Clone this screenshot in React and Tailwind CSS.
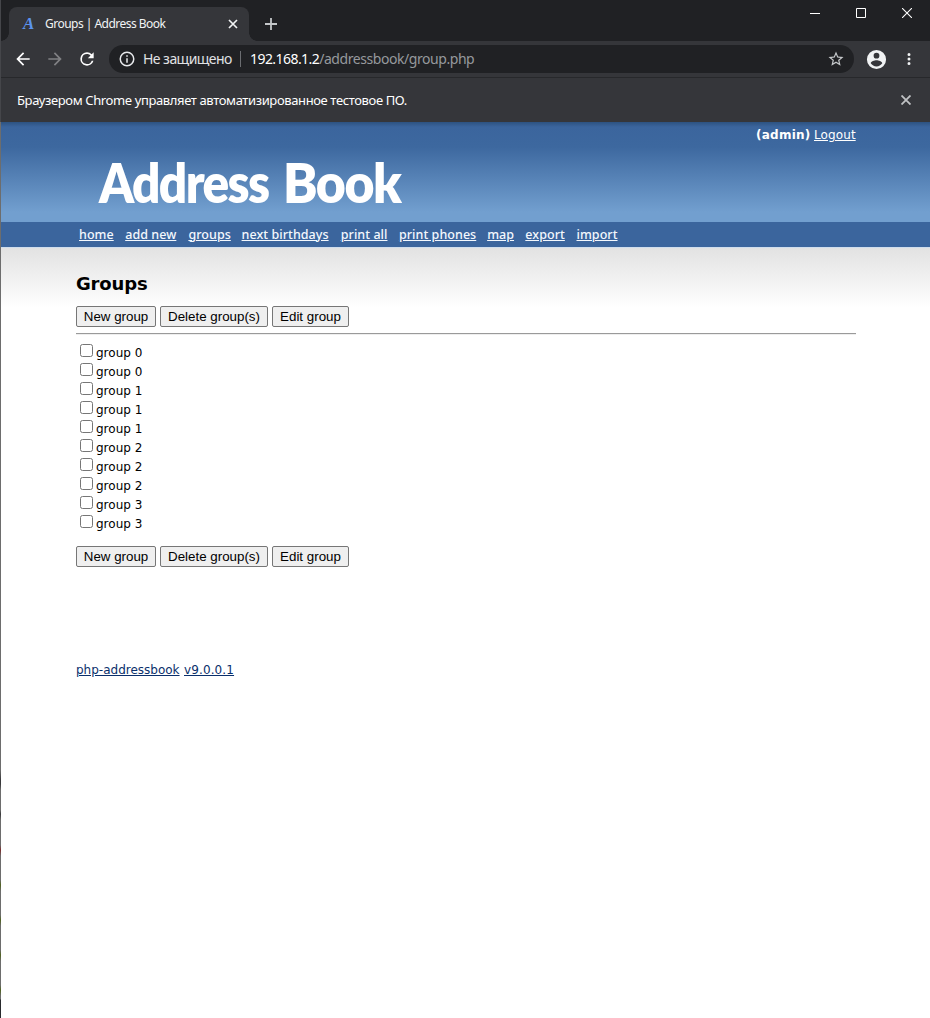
import React from "react";

const nav = [
  ["home", "w-[34px]"],
  ["add new", "w-[51px]"],
  ["groups", "w-[41px]"],
  ["next birthdays", "w-[87px]"],
  ["print all", "w-[46px]"],
  ["print phones", "w-[76px]"],
  ["map", "w-[26px]"],
  ["export", "w-[39px]"],
  ["import", "w-[40px]"],
];

const groups = ["group 0", "group 0", "group 1", "group 1", "group 1", "group 2", "group 2", "group 2", "group 3", "group 3"];

function Icon({ d, className }) {
  return (
    <svg viewBox="0 0 24 24" className={className} fill="currentColor">
      <path d={d} />
    </svg>
  );
}

function TitleBar() {
  return (
    <div className="flex h-[41px] bg-[#202124] pl-2">
      <div className="relative mt-[7px] flex h-[34px] w-[240px] items-center rounded-t-[8px] bg-[#35363a] pl-[14px] pr-[11px]">
        <span className="absolute -left-2 bottom-0 size-2 bg-[radial-gradient(circle_at_0_0,#202124_7.5px,#35363a_8px)]" />
        <span className="absolute -right-2 bottom-0 size-2 bg-[radial-gradient(circle_at_100%_0,#202124_7.5px,#35363a_8px)]" />
        <span className="w-[22px] shrink-0 font-['Liberation_Serif',serif] text-[17px] font-bold italic leading-4 text-[#5b93ee]">A</span>
        <span className="grow whitespace-nowrap text-[12px] leading-4 tracking-[-0.52px] text-[#f1f3f4]">Groups | Address Book</span>
        <svg viewBox="0 0 10 10" className="size-[10px] shrink-0 text-[#f1f3f4]" fill="none" stroke="currentColor" strokeWidth="1.7">
          <path d="M1 1l8 8M9 1L1 9" />
        </svg>
      </div>
      <svg viewBox="0 0 12 12" className="ml-4 mt-[18px] size-3" fill="none" stroke="#c4c7c9" strokeWidth="1.8">
        <path d="M6 0v12M0 6h12" />
      </svg>
      <div className="ml-auto flex gap-9 pr-[18px] pt-2">
        <svg viewBox="0 0 10 10" className="size-[10px]" stroke="#fff"><path d="M0 5.5h10" /></svg>
        <svg viewBox="0 0 10 10" className="size-[10px]" stroke="#fff" fill="none"><path d="M.5.5h9v9h-9z" /></svg>
        <svg viewBox="0 0 10 10" className="size-[10px]" stroke="#fff" strokeWidth="1.1"><path d="M0 0l10 10M10 0L0 10" /></svg>
      </div>
    </div>
  );
}

function Toolbar() {
  return (
    <div className="flex h-9 items-center bg-[#35363a] pl-3 pr-[12.5px]">
      <Icon className="size-5 text-white" d="M20 11H7.83l5.59-5.59L12 4l-8 8 8 8 1.41-1.41L7.83 13H20v-2z" />
      <Icon className="ml-3 size-5 text-[#808184]" d="M12 4l-1.41 1.41L16.17 11H4v2h12.17l-5.58 5.59L12 20l8-8z" />
      <Icon className="ml-3 size-5 text-white" d="M17.65 6.35A7.96 7.96 0 0 0 12 4a8 8 0 1 0 7.73 10h-2.08A6 6 0 1 1 12 6c1.66 0 3.14.69 4.22 1.78L13 11h7V4l-2.35 2.35z" />
      <div className="ml-3 flex h-7 w-[745px] items-center rounded-full bg-[#202124] pl-[9px] pr-[9px]">
        <Icon className="size-[18px] text-[#e8eaed]" d="M11 17h2v-6h-2v6zm1-15a10 10 0 1 0 0 20 10 10 0 0 0 0-20zm0 18a8 8 0 1 1 0-16 8 8 0 0 1 0 16zM11 9h2V7h-2v2z" />
        <span className="ml-[7px] w-[97px] whitespace-nowrap text-[14px] leading-5 tracking-[-0.55px] text-[#e0e2e5]">Не защищено</span>
        <span className="h-4 w-px bg-[#6b6d71]" />
        <span className="ml-[9px] whitespace-nowrap text-[14px] leading-5 text-[#96999d]">
          <span className="tracking-[-0.56px] text-white">192.168.1.2</span><span className="tracking-[-0.44px]">/addressbook/group.php</span>
        </span>
        <Icon className="ml-auto size-[18px] text-[#c6c9cc]" d="M22 9.24l-7.19-.62L12 2 9.19 8.63 2 9.24l5.46 4.73L5.82 21 12 17.27 18.18 21l-1.63-7.03L22 9.24zM12 15.4l-3.76 2.27 1-4.28-3.32-2.88 4.38-.38L12 6.1l1.71 4.04 4.38.38-3.32 2.88 1 4.28L12 15.4z" />
      </div>
      <Icon className="ml-auto size-[23px] text-[#f1f3f4]" d="M12 2a10 10 0 1 0 0 20 10 10 0 0 0 0-20zm0 3a3 3 0 1 1 0 6 3 3 0 0 1 0-6zm0 14.2A7.2 7.2 0 0 1 6 15.98c.03-1.99 4-3.08 6-3.08 1.99 0 5.97 1.09 6 3.08a7.2 7.2 0 0 1-6 3.22z" />
      <Icon className="ml-[12px] size-[18px] text-[#f1f3f4]" d="M12 8a2 2 0 1 0 0-4 2 2 0 0 0 0 4zm0 2a2 2 0 1 0 0 4 2 2 0 0 0 0-4zm0 6a2 2 0 1 0 0 4 2 2 0 0 0 0-4z" />
    </div>
  );
}

function Buttons() {
  const base = "h-[21px] rounded-[2px] border border-[#767676] bg-[#efefef] text-center font-['Liberation_Sans',sans-serif] text-[13.333px] leading-[19px] text-black whitespace-nowrap";
  return (
    <div className="flex gap-1">
      <button className={base + " w-[80px]"}>New group</button>
      <button className={base + " w-[108px]"}>Delete group(s)</button>
      <button className={base + " w-[77px]"}>Edit group</button>
    </div>
  );
}

export default function App() {
  return (
    <div className="flex h-[1018px] w-[930px] overflow-hidden bg-white">
      <div className="w-px shrink-0 bg-[linear-gradient(#45464a_0_122px,#6d6d6d_122px_770px,#39393b_780px_784px,#6d6d6d_790px_810px,#39393b_814px,#6d6d6d_820px_845px,#792c2c_850px,#6d6d6d_856px_880px,#4f621f_885px,#6d6d6d_891px_915px,#4f621f_920px,#6d6d6d_926px_950px,#4f621f_955px,#6d6d6d_961px_985px,#4f621f_990px,#6d6d6d_996px_999px,#292a2d_1000px)]" />
      <div className="flex min-w-0 grow flex-col">
        <div className="font-['Noto_Sans',sans-serif]">
          <TitleBar />
          <Toolbar />
          <div className="flex h-[45px] items-center justify-between border-t border-[#27282b] bg-[#35363a] pl-4 pr-[19px]">
            <span className="whitespace-nowrap text-[13px] leading-5 tracking-[-0.38px] text-white">Браузером Chrome управляет автоматизированное тестовое ПО.</span>
            <svg viewBox="0 0 10 10" className="size-[10px]" fill="none" stroke="#c0c2c4" strokeWidth="1.8"><path d="M.5.5l9 9M9.5.5l-9 9" /></svg>
          </div>
        </div>

        <header className="h-[100px] bg-[linear-gradient(#2d5280_0,#3b659d_5px,#3d689f_25px,#729fcf_90px,#729fcf_100px)] pl-[75px] pr-[74px] font-['DejaVu_Sans',sans-serif] text-white">
          <div className="flex h-6 justify-end gap-1 pt-[5px] text-[12px] leading-4">
            <span className="w-[54px] whitespace-nowrap font-bold tracking-[0.25px]">(admin)</span>
            <span className="w-[42px] whitespace-nowrap tracking-[0.1px] underline">Logout</span>
          </div>
          <h1 className="flex h-[72px] items-center pl-[23px] font-['Lato',sans-serif] text-[55px] font-extrabold leading-[74px]">
            <span className="w-[184px] origin-left scale-x-[0.9] whitespace-nowrap tracking-[-1.8px]">Address</span>
            <span className="origin-left scale-x-[0.94] whitespace-nowrap tracking-[-1.5px]">Book</span>
          </h1>
        </header>
        <nav className="flex h-[25px] items-center gap-[12.2px] bg-[#3b659d] pl-[78px] font-['Noto_Sans',sans-serif] text-[12.5px] font-medium leading-4 text-[#f4f8fd]">
          {nav.map(([label, width]) => (
            <a key={label} className={"shrink-0 whitespace-nowrap tracking-[0.06px] underline " + width}>{label}</a>
          ))}
        </nav>

        <main className="grow border-t border-[#cfdded] bg-[linear-gradient(#e2e2e2,#ffffff_60px)] pl-[75px] pr-[74px] font-['DejaVu_Sans',sans-serif] text-[12px] text-black">
          <h2 className="pt-6 text-[18px] font-bold leading-6 tracking-[-0.15px]">Groups</h2>
          <div className="pt-[10px]"><Buttons /></div>
          <div className="mt-[6px] h-[2px] border-t border-b border-t-[#9a9a9a] border-b-[#eeeeee]" />
          <div className="pl-1 pt-2">
            {groups.map((name, i) => (
              <label key={i} className="flex h-[19px] items-start">
                <input type="checkbox" className="mt-px size-[13px] appearance-none rounded-[2.5px] border border-[#767676] bg-white" />
                <span className="ml-[3px] mt-[2px] whitespace-nowrap leading-4">{name}</span>
              </label>
            ))}
          </div>
          <div className="pt-[13px]"><Buttons /></div>
          <footer className="mt-[95px] flex gap-1 leading-4 text-[#0a2f6b]">
            <a className="w-[104px] whitespace-nowrap underline">php-addressbook</a>
            <a className="whitespace-nowrap tracking-[0.12px] underline">v9.0.0.1</a>
          </footer>
        </main>
      </div>
    </div>
  );
}
